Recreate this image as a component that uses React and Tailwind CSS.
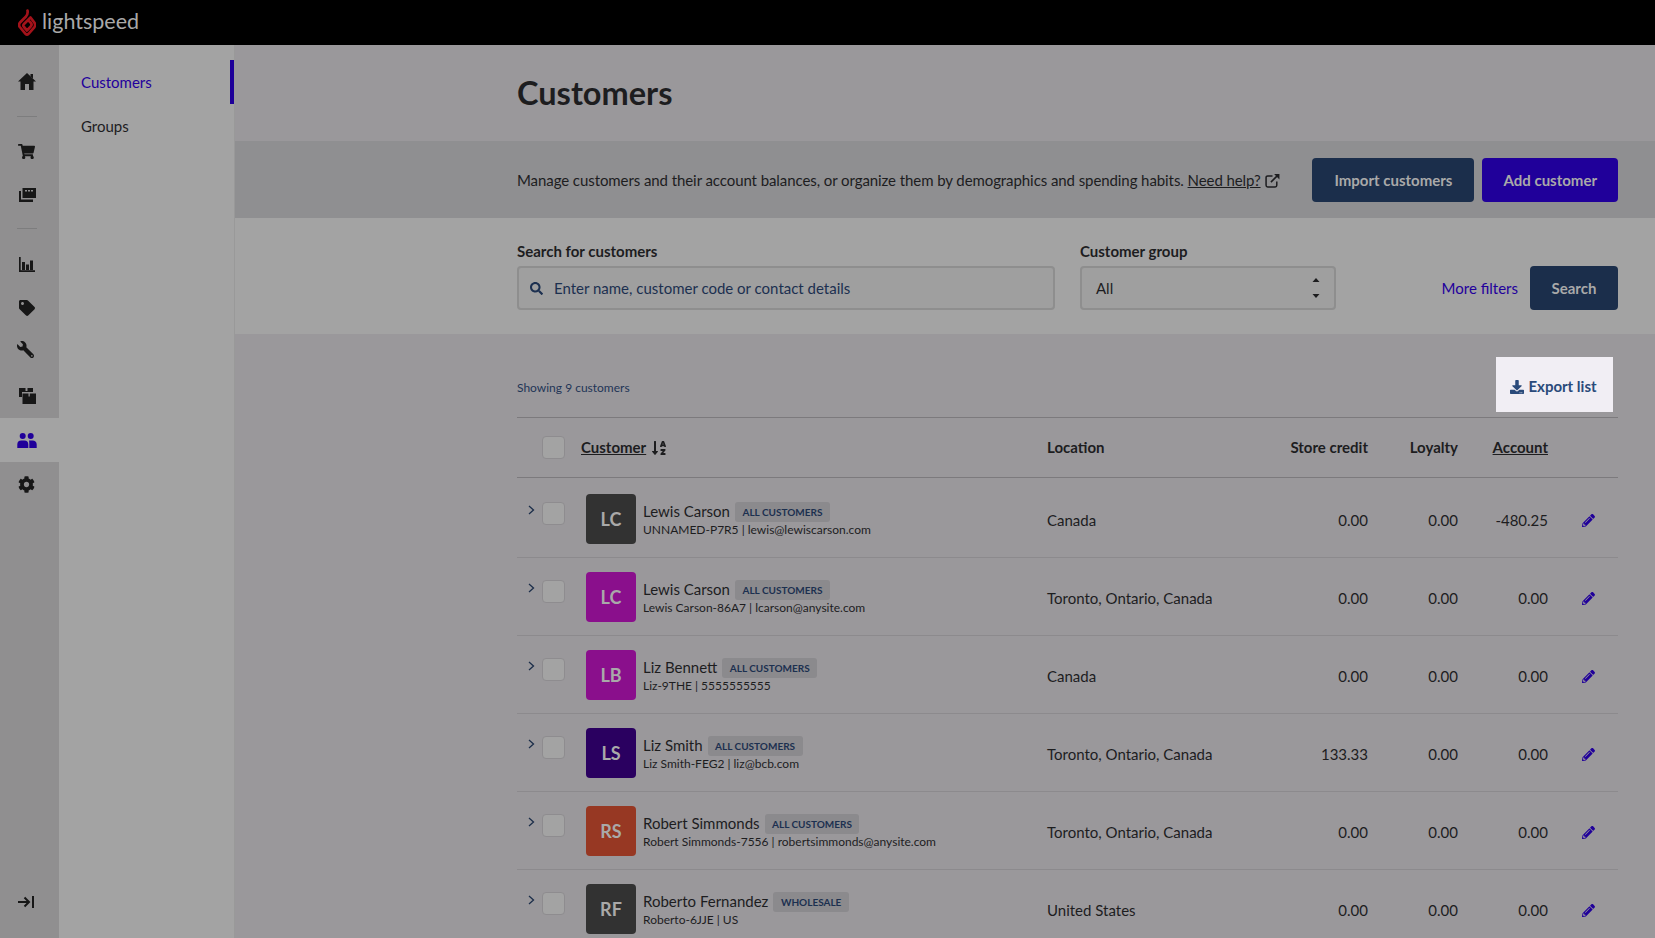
import React from 'react';
import { FaShoppingCart, FaTag, FaWrench, FaCog, FaSearch, FaDownload, FaPencilAlt, FaSortAlphaDown } from 'react-icons/fa';

const customers = [
    { initials: 'LC', color: 'bg-[#323232]', name: 'Lewis Carson', group: 'ALL CUSTOMERS', sub: 'UNNAMED-P7R5 | lewis@lewiscarson.com', location: 'Canada', credit: '0.00', loyalty: '0.00', account: '-480.25' },
    { initials: 'LC', color: 'bg-[#8a0f8c]', name: 'Lewis Carson', group: 'ALL CUSTOMERS', sub: 'Lewis Carson-86A7 | lcarson@anysite.com', location: 'Toronto, Ontario, Canada', credit: '0.00', loyalty: '0.00', account: '0.00' },
    { initials: 'LB', color: 'bg-[#8a0f8c]', name: 'Liz Bennett', group: 'ALL CUSTOMERS', sub: 'Liz-9THE | 5555555555', location: 'Canada', credit: '0.00', loyalty: '0.00', account: '0.00' },
    { initials: 'LS', color: 'bg-[#2a0060]', name: 'Liz Smith', group: 'ALL CUSTOMERS', sub: 'Liz Smith-FEG2 | liz@bcb.com', location: 'Toronto, Ontario, Canada', credit: '133.33', loyalty: '0.00', account: '0.00' },
    { initials: 'RS', color: 'bg-[#973823]', name: 'Robert Simmonds', group: 'ALL CUSTOMERS', sub: 'Robert Simmonds-7556 | robertsimmonds@anysite.com', location: 'Toronto, Ontario, Canada', credit: '0.00', loyalty: '0.00', account: '0.00' },
    { initials: 'RF', color: 'bg-[#323232]', name: 'Roberto Fernandez', group: 'WHOLESALE', sub: 'Roberto-6JJE | US', location: 'United States', credit: '0.00', loyalty: '0.00', account: '0.00' },
];

const cols = 'grid grid-cols-[530px_200px_121px_90px_90px_70px]';

const Flame = () => (
    <svg width="18" height="27" viewBox="0 0 18 27" fill="none" stroke="#a3121a" strokeWidth="2.7" strokeLinejoin="round" strokeLinecap="round">
        <path d="M9.500 1.500C10 4 9.800 5.300 8 7.500L2 13.500C.8 15 .9 16.700 1.800 18L7.500 24.800C8.500 25.800 9.500 25.800 10.500 24.800L16.300 18.300C17.300 17 17.300 15.300 16.500 13.800L13.300 9.500" />
        <path d="M12.500 8.500L6 15C5 16 5 17 6 18L9 21.500L12.800 17.300C13.800 16.200 13.800 15 13 14L11.500 12.500" />
    </svg>
);

const HomeIcon = () => (
    <svg width="18" height="17" viewBox="0 0 18 17" fill="#171717">
        <path d="M9 0 18 8.500H15.500V17H11V11H7V17H2.500V8.500H0Z" />
        <path d="M12.500 1H15V5.500L12.500 3.500Z" />
    </svg>
);

const RegisterIcon = () => (
    <svg width="17" height="14" viewBox="0 0 17 14" fill="#171717">
        <path d="M3.500 0H17V10H3.500Z" />
        <path d="M0 3H2V11.500H14V14H0Z" />
        <rect x="6" y="2" width="2" height="1.500" fill="#908f90" />
        <rect x="9" y="2" width="2" height="1.500" fill="#908f90" />
        <rect x="12" y="2" width="2" height="1.500" fill="#908f90" />
    </svg>
);

const ChartIcon = () => (
    <svg width="16" height="15" viewBox="0 0 16 15" fill="#171717">
        <path d="M0 0H1.700V13.200H16V15H0Z" />
        <path d="M3 5H6V13H3Z M7 7.500H10V13H7Z M11 3.500H14V13H11Z" />
    </svg>
);

const BoxesIcon = () => (
    <svg width="17" height="16" viewBox="0 0 17 16" fill="#171717">
        <path d="M0 0H6.500V3H8.500V0H14V4H3V9H0Z" />
        <path d="M3.500 5.500H9.500V8.500H10.800V5.500H17V16H3.500Z" />
    </svg>
);

const UsersIcon = () => (
    <svg width="20" height="15" viewBox="0 0 20 15" fill="#20009a">
        <circle cx="5.700" cy="3" r="3" />
        <circle cx="13.700" cy="3" r="3" />
        <path d="M.3 15V11.500A4 4 0 0 1 4.300 7.500H7.300A4 4 0 0 1 11.300 11.500V15Z" />
        <path d="M12 7.500H15.500A4 4 0 0 1 19.700 11.500V15H12.300V11C12.300 9.500 12.300 8.500 12 7.500Z" />
    </svg>
);

const CollapseIcon = () => (
    <svg width="16" height="12" viewBox="0 0 16 12" fill="none" stroke="#171717" strokeWidth="2">
        <path d="M0 6H11 M6.500 1.500 11 6 6.500 10.500" />
        <path d="M15 0V12" />
    </svg>
);

const ExternalIcon = () => (
    <svg width="15" height="15" viewBox="0 0 14 14" fill="none" stroke="#1d1d1f" strokeWidth="1.4">
        <path d="M7 2.700H2.500A1.500 1.500 0 0 0 1 4.200V11.500A1.500 1.500 0 0 0 2.500 13H9.500A1.500 1.500 0 0 0 11 11.500V8" />
        <path d="M5.500 8.500 12.500 1.500" />
        <path d="M8.500 1H13.500V6Z" fill="#1d1d1f" stroke="none" />
    </svg>
);

const railItem = 'h-[44px] flex items-center justify-center text-[#171717]';

const Rail = () => (
    <aside className="w-[59px] bg-[#908f90] flex flex-col shrink-0">
        <div className={`${railItem} pr-[5px] mt-[14px]`}><HomeIcon /></div>
        <div className="w-5 h-px bg-[#7d7d7e] ml-[17px] mt-[13px]"></div>
        <div className={`${railItem} pr-[7px] mt-[12px]`}><FaShoppingCart size={17} /></div>
        <div className={`${railItem} pr-[5px]`}><RegisterIcon /></div>
        <div className="w-5 h-px bg-[#7d7d7e] ml-[17px] mt-[11px]"></div>
        <div className={`${railItem} pr-[5px] mt-[13px]`}><ChartIcon /></div>
        <div className={`${railItem} pr-[5px]`}><FaTag size={16} /></div>
        <div className={`${railItem} pr-[9px] pb-[5px]`}><FaWrench size={17} className="-scale-x-100" /></div>
        <div className={`${railItem} pr-[5px] h-[43px]`}><BoxesIcon /></div>
        <div className={`${railItem} pr-[5px] bg-[#a3a3a3]`}><UsersIcon /></div>
        <div className={`${railItem} pr-[7px]`}><FaCog size={17} /></div>
        <div className={`${railItem} pr-[7px] mt-auto mb-[14px]`}><CollapseIcon /></div>
    </aside>
);

const SubNav = () => (
    <nav className="w-[176px] bg-[#a3a3a3] shrink-0 border-r border-[#999999] text-[15px]">
        <div className="h-[44px] mt-[15px] pl-[22px] flex items-center text-[#22009c] border-r-4 border-[#1e0099]">Customers</div>
        <div className="h-[44px] pl-[22px] flex items-center text-[#1d1d1f]">Groups</div>
    </nav>
);

const Row = ({ c }) => (
    <div className={`${cols} h-[78px] border-b border-[#8c8a8d] text-[#1d1d1f] text-[15px]`}>
        <div className="flex">
            <svg className="ml-[11px] mt-[25px]" width="7" height="10" viewBox="0 0 7 10" fill="none" stroke="#1c2e4a" strokeWidth="1.3"><path d="M1 1L5.500 5 1 9" /></svg>
            <div className="w-[23px] h-[23px] ml-[7px] mt-[22px] rounded-[4px] bg-[#a3a3a3] border border-[#8e8c8f]"></div>
            <div className={`${c.color} w-[50px] h-[50px] ml-[21px] mt-[14px] rounded-[4px] flex items-center justify-center text-[18px] font-bold text-[#a9a9a9] shrink-0`}>{c.initials}</div>
            <div className="ml-[7px] mt-[21px]">
                <div className="flex items-center h-[20px]">
                    <span>{c.name}</span>
                    <span className="ml-[5px] mt-[2px] h-[20px] px-[7.5px] rounded-[3px] bg-[#8b8a8d] text-[#1c3050] text-[10px] font-bold flex items-center">{c.group}</span>
                </div>
                <div className="text-[12px] mt-px leading-[16px] whitespace-nowrap">{c.sub}</div>
            </div>
        </div>
        <div className="flex items-center pt-[3px]">{c.location}</div>
        <div className="flex items-center justify-end pt-[3px]">{c.credit}</div>
        <div className="flex items-center justify-end pt-[3px]">{c.loyalty}</div>
        <div className="flex items-center justify-end pt-[3px]">{c.account}</div>
        <div className="flex items-center justify-end pr-[23px] pt-[3px] text-[#20009a]"><FaPencilAlt size={13} /></div>
    </div>
);

const App = () => {
    return (
        <div className="h-screen overflow-hidden flex flex-col font-['Lato','Liberation_Sans',sans-serif] bg-[#9a989b]">
            <header className="h-[45px] bg-black shrink-0 flex items-center pl-[18px]">
                <Flame />
                <span className="text-[#a9a9a9] text-[21.5px] ml-[6px] pb-[2px] leading-none">lightspeed</span>
            </header>
            <div className="flex flex-1 min-h-0">
                <Rail />
                <SubNav />
                <main className="flex-1 min-w-0">
                    <div className="h-[96px] pl-[282px] flex items-center">
                        <h1 className="text-[32.5px] font-bold text-[#1d1d1f]">Customers</h1>
                    </div>
                    <div className="h-[77px] bg-[#8f8f91] pl-[282px] pr-[37px] flex items-center justify-between">
                        <p className="text-[15px] tracking-[-0.08px] pt-px text-[#1d1d1f] flex items-center gap-[4px]">
                            <span>Manage customers and their account balances, or organize them by demographics and spending habits. <a className="underline">Need help?</a></span>
                            <ExternalIcon />
                        </p>
                        <div className="flex gap-2">
                            <button className="h-[44px] px-[22px] pt-px rounded-[4px] bg-[#1b2e4b] text-[#a9a9a9] text-[15px] font-bold">Import customers</button>
                            <button className="h-[44px] px-[21px] pt-px rounded-[4px] bg-[#20009a] text-[#a9a9a9] text-[15px] font-bold">Add customer</button>
                        </div>
                    </div>
                    <div className="h-[116px] bg-[#a3a3a3] pl-[282px] pr-[37px] flex items-end pb-[24px] text-[#1d1d1f]">
                        <div>
                            <div className="text-[15px] font-bold mb-[4px]">Search for customers</div>
                            <div className="w-[538px] h-[44px] rounded-[4px] border-2 border-[#8e8e8e] bg-[#9f9f9f] flex items-center pl-[11px] text-[#1c3050] text-[15px]">
                                <FaSearch size={13} />
                                <span className="ml-[11px]">Enter name, customer code or contact details</span>
                            </div>
                        </div>
                        <div className="ml-[25px]">
                            <div className="text-[15px] font-bold mb-[4px]">Customer group</div>
                            <div className="w-[256px] h-[44px] rounded-[4px] border-2 border-[#8e8e8e] bg-[#9f9f9f] flex items-center justify-between pl-[14px] pr-[14px] text-[15px]">
                                <span>All</span>
                                <svg width="8" height="22" viewBox="0 0 8 22" fill="#1d1d1f"><path d="M4 1L7.500 5H.5Z M4 21L7.500 17H.5Z" /></svg>
                            </div>
                        </div>
                        <div className="ml-auto flex items-center gap-3">
                            <a className="text-[15px] text-[#22009c]">More filters</a>
                            <button className="h-[44px] w-[88px] rounded-[4px] bg-[#1b2e4b] text-[#a9a9a9] text-[15px] font-bold">Search</button>
                        </div>
                    </div>
                    <div className="pl-[282px] pr-[37px]">
                        <div className="h-[84px] flex items-end justify-between pb-[5px] border-b border-[#7c7a7d]">
                            <span className="text-[12px] text-[#1f3557] mb-[15px]">Showing 9 customers</span>
                            <button className="w-[117px] h-[55px] mr-[5px] pt-[4px] pr-[2px] bg-[#f1eef4] text-[#2a4a7a] text-[15px] font-bold flex items-center justify-center gap-[4px]">
                                <FaDownload size={14} />
                                Export list
                            </button>
                        </div>
                        <div className={`${cols} h-[60px] border-b border-[#7c7a7d] text-[15px] font-bold text-[#1d1d1f]`}>
                            <div className="flex items-center">
                                <div className="w-[23px] h-[23px] ml-[25px] rounded-[4px] bg-[#a3a3a3] border border-[#8e8c8f]"></div>
                                <span className="ml-[16px] underline">Customer</span>
                                <FaSortAlphaDown size={16} className="ml-[5px]" />
                            </div>
                            <div className="flex items-center">Location</div>
                            <div className="flex items-center justify-end">Store credit</div>
                            <div className="flex items-center justify-end">Loyalty</div>
                            <div className="flex items-center justify-end underline">Account</div>
                            <div></div>
                        </div>
                        <div className="pt-[2px]">
                            {customers.map((c, i) => <Row key={i} c={c} />)}
                        </div>
                    </div>
                </main>
            </div>
        </div>
    );
};

export default App;
